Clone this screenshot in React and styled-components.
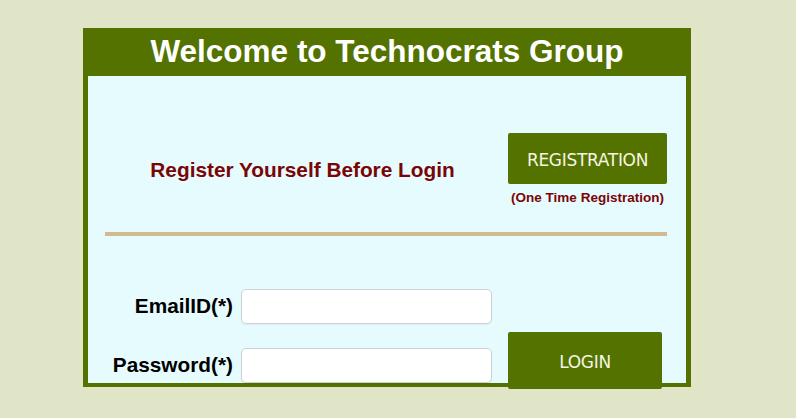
import React from 'react';
import styled, { createGlobalStyle } from 'styled-components';

const GlobalStyle = createGlobalStyle`
  html, body {
    margin: 0;
    padding: 0;
    background: #e0e5c8;
    font-family: "Liberation Sans", Arial, sans-serif;
  }
`;

const Page = styled.div`
  padding: 28px 0 0 83px;
  min-height: 418px;
  box-sizing: border-box;
`;

const Card = styled.div`
  width: 608px;
  box-sizing: border-box;
  background: #537200;
  padding: 0 5px 4px 5px;
`;

const Title = styled.h1`
  margin: 0;
  height: 48px;
  line-height: 46px;
  text-align: center;
  color: #ffffff;
  font-size: 31.5px;
  font-weight: bold;
`;

const Panel = styled.div`
  height: 307px;
  box-sizing: border-box;
  background: #e6fbfe;
  padding: 57px 19px 0 17px;
`;

const TopRow = styled.div`
  display: grid;
  grid-template-columns: 395px 159px;
  column-gap: 8px;
  align-items: center;
`;

const Lead = styled.div`
  text-align: center;
  color: #7a0505;
  font-size: 20.8px;
  font-weight: bold;
`;

const RegisterBox = styled.div`
  display: flex;
  flex-direction: column;
  align-items: center;
  gap: 6px;
`;

const GreenButton = styled.button`
  width: ${(p) => p.w}px;
  height: ${(p) => p.h}px;
  border: none;
  border-radius: 2px;
  background: #537200;
  color: #f6f6e0;
  font-family: "DejaVu Sans", Verdana, sans-serif;
  font-size: 17px;
  letter-spacing: -0.3px;
  padding: 2px 0 0 0;
  cursor: pointer;
`;

const Note = styled.div`
  color: #7a0505;
  font-size: 13.5px;
  font-weight: bold;
  line-height: 16px;
`;

const Divider = styled.hr`
  margin: 26px 0 0 0;
  border: none;
  height: 4px;
  background: #d3b990;
`;

const Form = styled.div`
  margin-top: 53px;
  display: grid;
  grid-template-columns: 128px 251px 154px;
  grid-template-rows: 34px 34px;
  column-gap: 8px;
  row-gap: 25px;
  align-items: center;
`;

const Label = styled.label`
  text-align: right;
  color: #000;
  font-size: 20.8px;
  font-weight: bold;
`;

const Input = styled.input`
  height: 35px;
  box-sizing: border-box;
  border: 1px solid #cdd2d6;
  border-radius: 5px;
  background: #ffffff;
  box-shadow: 0 1px 2px rgba(0, 0, 0, 0.06);
  padding: 4px 8px;
  font-size: 15px;
  outline: none;
`;

const LoginCell = styled.div`
  grid-column: 3;
  grid-row: 2;
  align-self: start;
  margin-top: -16px;
  margin-left: 8px;
`;

export default function App() {
  return (
    <>
      <GlobalStyle />
      <Page>
        <Card>
          <Title>Welcome to Technocrats Group</Title>
          <Panel>
            <TopRow>
              <Lead>Register Yourself Before Login</Lead>
              <RegisterBox>
                <GreenButton w={159} h={51}>REGISTRATION</GreenButton>
                <Note>(One Time Registration)</Note>
              </RegisterBox>
            </TopRow>
            <Divider />
            <Form>
              <Label htmlFor="email">EmailID(*)</Label>
              <Input id="email" type="text" />
              <span />
              <Label htmlFor="password">Password(*)</Label>
              <Input id="password" type="password" />
              <LoginCell>
                <GreenButton w={154} h={57}>LOGIN</GreenButton>
              </LoginCell>
            </Form>
          </Panel>
        </Card>
      </Page>
    </>
  );
}
